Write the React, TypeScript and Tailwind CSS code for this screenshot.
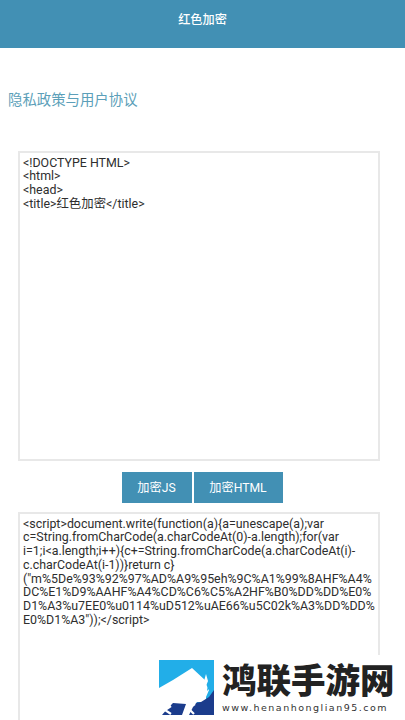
const FONT = "font-['Roboto','Noto_Sans_CJK_SC',sans-serif]";

const encrypted = `<script>document.write(function(a){a=unescape(a);var
c=String.fromCharCode(a.charCodeAt(0)-a.length);for(var
i=1;i<a.length;i++){c+=String.fromCharCode(a.charCodeAt(i)-
c.charCodeAt(i-1))}return c}
("m%5De%93%92%97%AD%A9%95eh%9C%A1%99%8AHF%A4%
DC%E1%D9%AAHF%A4%CD%C6%C5%A2HF%B0%DD%DD%E0%
D1%A3%u7EE0%u0114%uD512%uAE66%u5C02k%A3%DD%DD%
E0%D1%A3"));</script>`;

const source = `<!DOCTYPE HTML>
<html>
<head>
<title>红色加密</title>`;

function CodeBox({ text, height }: { text: string; height: string }) {
  return (
    <div className={`ml-[18px] mr-[25px] border-2 border-[#e8e8e8] bg-white px-[3px] pt-[2.5px] text-[12.4px] leading-[13.75px] text-[#2e2e2e] whitespace-pre-wrap ${height}`}>
      {text}
    </div>
  );
}

function Logo() {
  return (
    <svg width="55" height="55" viewBox="0 0 55 55" className="shrink-0">
      <rect width="55" height="55" fill="#22aee8" />
      {/* mountain */}
      <path d="M0 28 L14 20 L33 8 L47 21 L47 42 L0 42Z" fill="#fff" />
      {/* ground */}
      <path d="M0 39 L10 37 L28 44 L42 42 L50 37 L55 30 V55 H0Z" fill="#1b3c8c" />
      {/* bison body and legs */}
      <path d="M0 33 L20 30 L40 30 L47 24 L50 30 L47 37 L42 41 L38 42 L34 47 L30 55 L23 55 L27 44 L14 43 L9 48 L3 55 L0 55Z" fill="#fff" />
      {/* horn */}
      <path d="M47 14 L51 20 L52 27 L48 31 L49 24Z" fill="#22aee8" />
      <path d="M47 14 L49 21 L47 26 L45 21Z" fill="#fff" />
      {/* chevrons */}
      <path d="M12 46 L6 50 L12 54" fill="none" stroke="#fff" strokeWidth="2.2" />
      <path d="M36 44 L29 48 L35 54" fill="none" stroke="#fff" strokeWidth="2.2" />
    </svg>
  );
}

export default function App() {
  return (
    <div className={`relative h-[720px] w-[405px] overflow-hidden bg-white ${FONT}`}>
      {/* Header */}
      <header className="flex h-[48px] items-center justify-center bg-[#4290b4] pb-[8px] text-[12.2px] font-medium text-white">
        红色加密
      </header>

      <div className="mt-[44px] pl-[8px] text-[14.4px] leading-[18px] text-[#5c9fb9]">隐私政策与用户协议</div>

      <div className="mt-[41px]">
        <CodeBox text={source} height="h-[310px]" />
      </div>

      <div className="mt-[11px] flex justify-center gap-[2px] pr-[1px]">
        <button className="h-[31px] w-[70px] bg-[#4290b4] pt-[1px] text-[12.2px] text-white">加密JS</button>
        <button className="h-[31px] w-[89px] bg-[#4290b4] pt-[1px] text-[12.2px] text-white">加密HTML</button>
      </div>

      <div className="mt-[9px]">
        <CodeBox text={encrypted} height="h-[300px]" />
      </div>

      {/* Watermark */}
      <div className="absolute bottom-0 right-0 flex h-[65px] w-[252px] items-start gap-[8px] bg-white pl-[6px] pt-[5px]">
        <Logo />
        <div className="mt-[1px] flex flex-col">
          <div className="whitespace-nowrap text-[34.5px] font-black leading-[40px] text-[#222]">鸿联手游网</div>
          <div className="mt-[1px] whitespace-nowrap font-['DejaVu_Sans',sans-serif] text-[9.5px] leading-[12px] tracking-[1.5px] text-[#333]">www.henanhonglian95.com</div>
        </div>
      </div>
    </div>
  );
}
